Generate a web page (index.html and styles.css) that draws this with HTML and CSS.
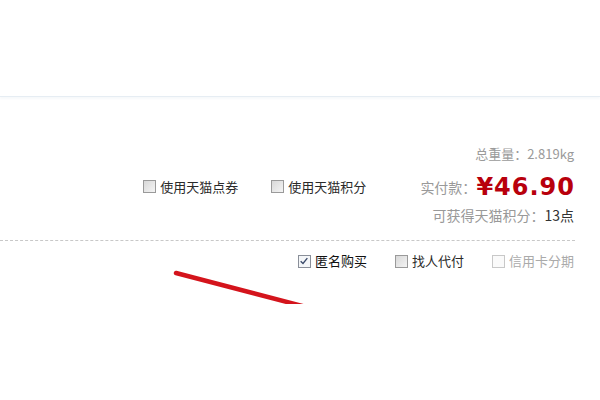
FILE: index.html
```html
<!DOCTYPE html>
<html lang="zh-CN">
<head>
<meta charset="utf-8">
<title>订单结算</title>
<link rel="stylesheet" href="styles.css">
</head>
<body>
<div class="page">
  <div class="topbar"></div>
  <div class="order">
    <div class="summary">
      <div class="coupons">
        <label class="opt"><span class="box"></span><span class="txt">使用天猫点券</span></label>
        <label class="opt"><span class="box"></span><span class="txt">使用天猫积分</span></label>
      </div>
      <div class="price">
        <div class="row weight">总重量：2.819kg</div>
        <div class="row pay"><span class="lbl">实付款：</span><span class="amount">¥46.90</span></div>
        <div class="row points">可获得天猫积分：<span class="pts">13点</span></div>
      </div>
    </div>
    <div class="extras">
      <label class="opt strong"><span class="box checked"><svg viewBox="0 0 12 12" width="10" height="10"><path d="M2 6.2 L4.8 9 L10 2.5" fill="none" stroke="#3a4a6a" stroke-width="1.6"/></svg></span><span class="txt">匿名购买</span></label>
      <label class="opt"><span class="box"></span><span class="txt">找人代付</span></label>
      <label class="opt disabled"><span class="box"></span><span class="txt">信用卡分期</span></label>
    </div>
  </div>
  <svg class="arrow" width="600" height="400" viewBox="0 0 600 400">
    <defs><clipPath id="c"><rect x="0" y="0" width="600" height="304"/></clipPath></defs>
    <line x1="176" y1="273" x2="310" y2="308" stroke="#d4141c" stroke-width="4.5" stroke-linecap="round" clip-path="url(#c)"/>
  </svg>
</div>
</body>
</html>
```

FILE: styles.css
```css
html, body {
  margin: 0;
  padding: 0;
  background: #fff;
}
body {
  font-family: "Noto Sans CJK SC", "Noto Sans", sans-serif;
  color: #333;
}
.page {
  position: relative;
  width: 600px;
  height: 400px;
  overflow: hidden;
}
.topbar {
  height: 96px;
  border-bottom: 1px solid #e6edf3;
  box-shadow: 0 2px 2px #f7f9fb;
}
.order {
  width: 575px;
}
.summary {
  display: flex;
  justify-content: flex-end;
  align-items: center;
  padding-top: 45px;
  padding-bottom: 12px;
  border-bottom: 1px dashed #c8c8c8;
}
.coupons {
  display: flex;
  gap: 33px;
  margin-right: 54px;
  margin-top: 3px;
}
.opt {
  display: flex;
  align-items: center;
  gap: 4px;
  font-size: 13px;
  line-height: 16px;
  color: #2a2a2a;
}
.box {
  width: 11px;
  height: 11px;
  border: 1px solid #9a9a9a;
  background: linear-gradient(135deg, #d8d8d8, #f4f4f4);
  display: flex;
  align-items: center;
  justify-content: center;
  box-sizing: content-box;
}
.box.checked {
  background: #f4f6f8;
  border-color: #8a8f99;
}
.price {
  text-align: right;
  padding-right: 1px;
}
.row {
  white-space: nowrap;
}
.weight {
  font-size: 13px;
  line-height: 24px;
  color: #9a9a9a;
}
.pay {
  line-height: 36px;
  height: 36px;
}
.lbl {
  font-size: 14px;
  color: #999;
  vertical-align: middle;
}
.amount {
  font-family: "DejaVu Sans", "Liberation Sans", sans-serif;
  font-weight: bold;
  font-size: 24px;
  letter-spacing: 1px;
  color: #b8000c;
  vertical-align: middle;
  margin-right: -1px;
}
.points {
  font-size: 14px;
  line-height: 26px;
  color: #999;
}
.pts {
  color: #333;
}
.extras {
  display: flex;
  justify-content: flex-end;
  gap: 28px;
  padding-top: 12px;
  padding-right: 1px;
}
.extras .opt.strong {
  color: #111;
}
.extras .opt.disabled {
  color: #aaa;
}
.extras .opt.disabled .box {
  border-color: #c8c8c8;
  background: #fafafa;
}
.arrow {
  position: absolute;
  left: 0;
  top: 0;
  pointer-events: none;
}
```
